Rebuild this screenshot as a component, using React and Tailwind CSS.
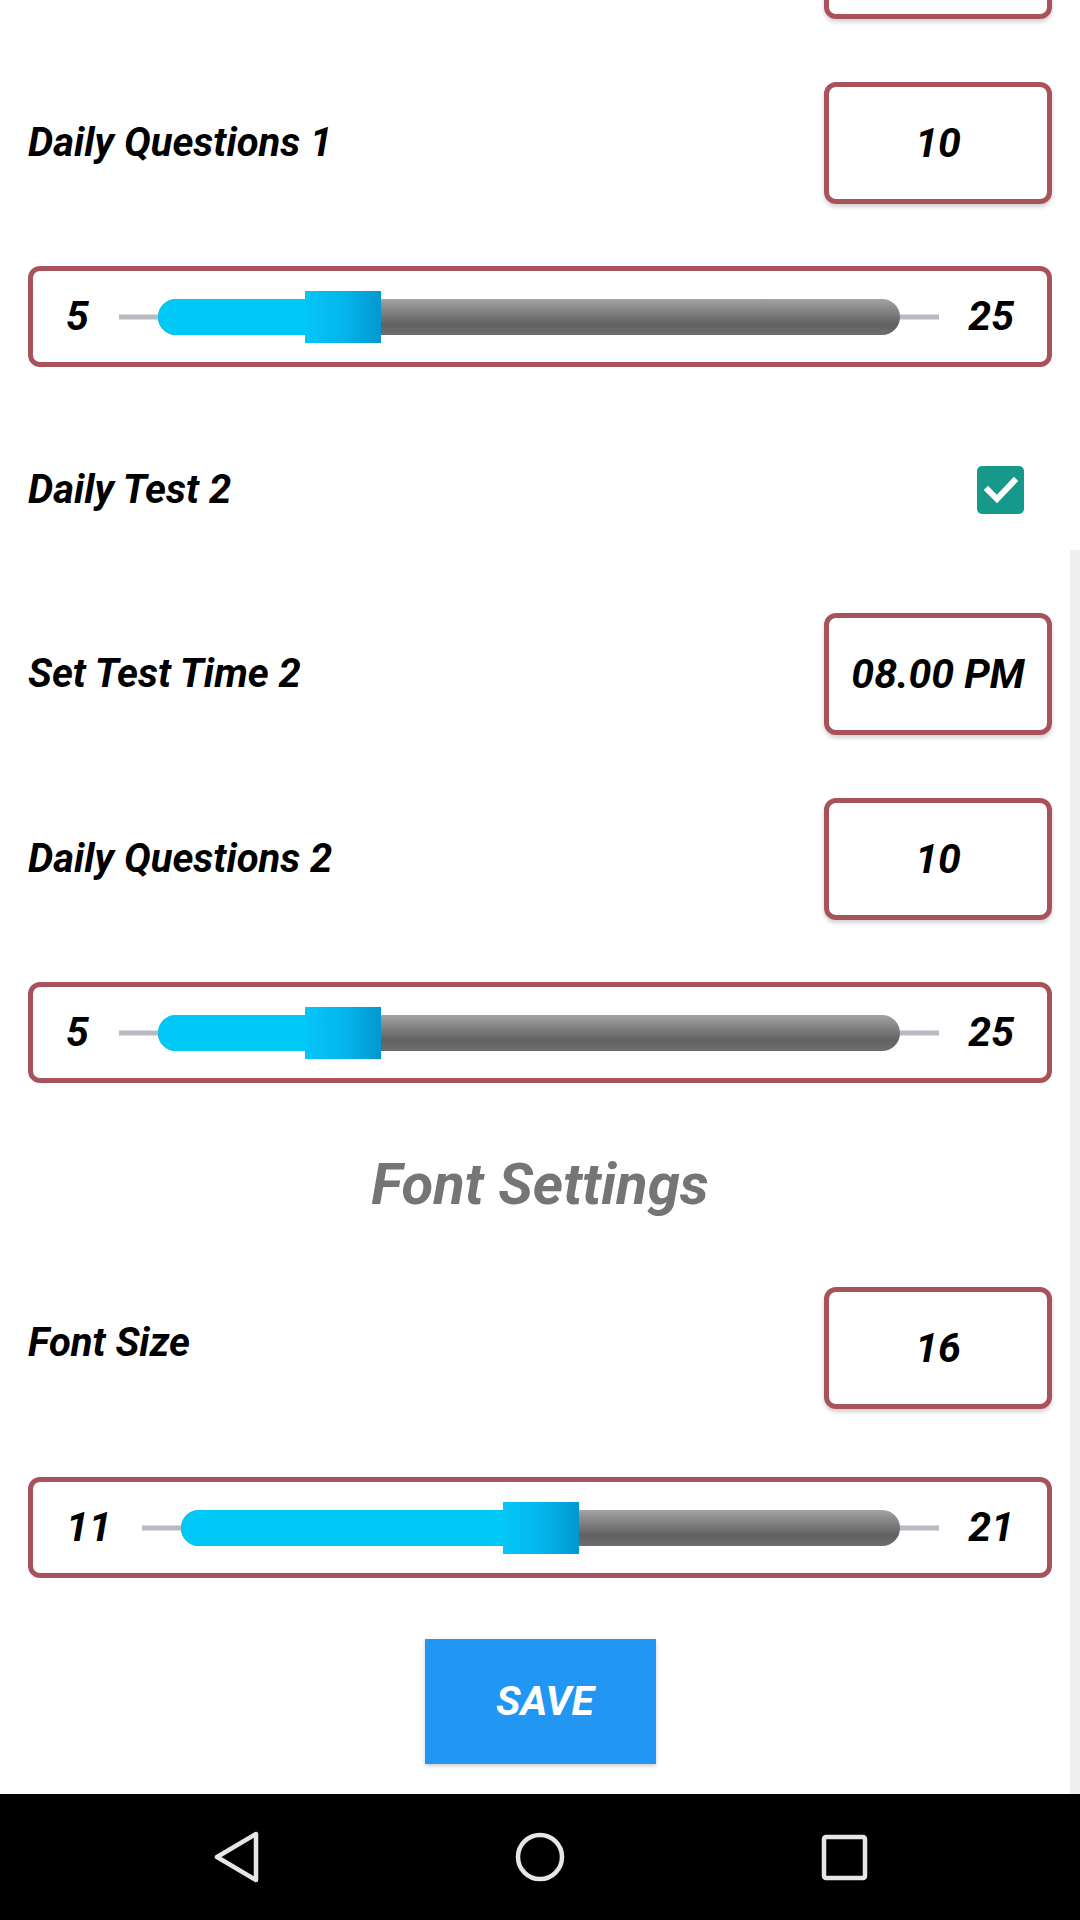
import React from 'react';

const font = "font-['Roboto','Liberation_Sans',sans-serif] font-bold italic";

const ValueBox = ({ value }) => (
  <div className="w-[228px] h-[122px] shrink-0 border-[5px] border-[#a8525c] rounded-[12px] bg-white shadow-[0_3px_4px_rgba(0,0,0,0.18)] flex items-center justify-center">
    {value && <span className={`${font} text-[41px] leading-none text-black`}>{value}</span>}
  </div>
);

const Row = ({ label, value, className = '', labelClass = '' }) => (
  <div className={`flex items-center justify-between ${className}`}>
    <span className={`${font} text-[40px] leading-none text-black ${labelClass}`}>{label}</span>
    <ValueBox value={value} />
  </div>
);

const Slider = ({ min, max, value, className = '' }) => {
  const pct = `${((value - min) / (max - min)) * 100}%`;
  return (
    <div className={`h-[101px] border-[5px] border-[#a8525c] rounded-[12px] bg-white flex items-center pl-[33px] pr-[33px] ${className}`}>
      <span className={`${font} text-[41px] leading-none text-black`}>{min}</span>
      <div className="relative flex-1 h-[52px] flex items-center ml-[30px] mr-[29px]">
        <div className="absolute inset-x-0 top-1/2 -translate-y-1/2 h-[5px] bg-[#b9b9c2]" />
        <div className="relative flex-1 mx-[39px] h-[36px] rounded-full bg-linear-to-b from-[#a4a4a4] via-[#616161] via-70% to-[#6e6e6e]">
          <div className="absolute left-0 top-0 bottom-0 rounded-l-full bg-[#00c9f8]" style={{ width: pct }} />
          <div
            className="absolute top-1/2 -translate-y-1/2 -translate-x-1/2 w-[76px] h-[52px] bg-linear-to-r from-[#05c6f6] via-[#04b6ec] to-[#0397d0]"
            style={{ left: pct }}
          />
        </div>
      </div>
      <span className={`${font} text-[41px] leading-none text-black`}>{max}</span>
    </div>
  );
};

const App = () => {
  return (
    <div className="w-[1080px] h-[1920px] bg-white flex flex-col overflow-hidden relative">
      <div className="h-[1794px] flex flex-col px-[28px] overflow-hidden">
        <div className="flex justify-end mt-[-103px]">
          <ValueBox value="" />
        </div>
        <Row label="Daily Questions 1" value="10" className="mt-[63px]" />
        <Slider min={5} max={25} value={10} className="mt-[62px]" />
        <div className="h-[122px] mt-[62px] flex items-center justify-between">
          <span className={`${font} text-[40px] leading-none text-black`}>Daily Test 2</span>
          <div className="w-[47px] h-[48px] mr-[28px] rounded-[5px] bg-[#16998a] flex items-center justify-center">
            <svg width="34" height="28" viewBox="0 0 34 28" fill="none">
              <path d="M4 14 L13 23 L30 5" stroke="white" strokeWidth="6" strokeLinecap="square" />
            </svg>
          </div>
        </div>
        <Row label="Set Test Time 2" value="08.00 PM" className="mt-[62px]" />
        <Row label="Daily Questions 2" value="10" className="mt-[63px]" />
        <Slider min={5} max={25} value={10} className="mt-[62px]" />
        <div className="h-[80px] mt-[61px] flex items-center justify-center">
          <span className={`${font} text-[58px] leading-none text-[#757575]`}>Font Settings</span>
        </div>
        <Row label="Font Size" value="16" className="mt-[63px]" labelClass="mb-[10px]" />
        <Slider min={11} max={21} value={16} className="mt-[68px]" />
        <div className="flex justify-center mt-[61px]">
          <button className="w-[231px] h-[125px] bg-[#2196f3] shadow-[0_2px_4px_rgba(0,0,0,0.2)] flex items-center justify-center pl-[10px]">
            <span className={`${font} text-[41px] leading-none text-white`}>SAVE</span>
          </button>
        </div>
      </div>

      {/* scroll indicator */}
      <div className="absolute right-0 top-[550px] w-[10px] h-[1244px] bg-[#eeeeee]" />

      <div className="h-[126px] bg-black flex items-center">
        <div className="w-full flex items-center relative h-full">
          <div className="absolute left-[212px] top-[37px]">
            <svg width="50" height="52" viewBox="0 0 50 52" fill="none">
              <path d="M44 3 L44 49 L5 26 Z" stroke="#e6e6e6" strokeWidth="4.5" strokeLinejoin="round" />
            </svg>
          </div>
          <div className="absolute left-[514px] top-[37px]">
            <svg width="52" height="52" viewBox="0 0 52 52" fill="none">
              <circle cx="26" cy="26" r="22" stroke="#e6e6e6" strokeWidth="4.5" />
            </svg>
          </div>
          <div className="absolute left-[821px] top-[40px]">
            <svg width="47" height="47" viewBox="0 0 47 47" fill="none">
              <rect x="3" y="3" width="41" height="41" rx="2" stroke="#e6e6e6" strokeWidth="4.5" />
            </svg>
          </div>
        </div>
      </div>
    </div>
  );
};

export default App;
